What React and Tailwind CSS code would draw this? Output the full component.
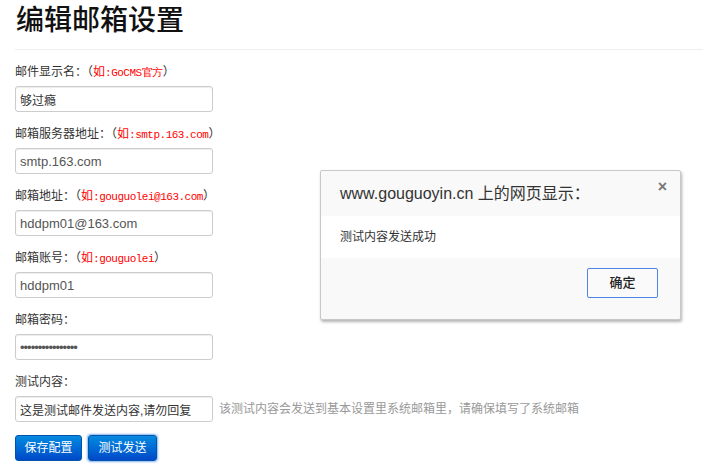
import React from 'react';

const cjk = { fontFamily: '"Liberation Sans", "Noto Sans CJK SC", sans-serif' };

// one labelled field of the mail settings form
const Field = ({ label, example, value, type = 'text', cjkValue = false, hint }) => (
    <div className="mb-[13px]">
        <div className="h-[18px] text-[12px] leading-[18px] text-[#333] whitespace-nowrap">
            {label}：{example && (
                <>
                    （<span className="text-[#f00]">如<span className="font-['Liberation_Mono',monospace] text-[11px] leading-[18px] tracking-[-0.5px]">{example}</span></span>）
                </>
            )}
        </div>
        <div className="mt-[5px] h-[26px] flex items-center">
            <input
                type={type}
                readOnly
                value={value}
                className={`w-[198px] h-[26px] px-[4px] border border-[#ccc] rounded-[3px] bg-white shadow-[inset_0_1px_1px_rgba(0,0,0,0.075)] outline-none ${cjkValue ? 'text-[12px] text-[#333]' : 'text-[13px] text-[#555]'} ${type === 'password' ? 'text-[10px] tracking-[-1px]' : ''}`}
                style={cjk}
            />
            {hint && <span className="ml-[6px] text-[12px] leading-[18px] text-[#999]">{hint}</span>}
        </div>
    </div>
);

export default function App() {
    return (
        <div className="relative w-[703px] h-[476px] bg-white overflow-hidden" style={cjk}>
            <div className="pl-[15px]">
                <h1 className="h-[50px] text-[28px] leading-[40px] pt-[1px] pl-[1px] font-medium text-[#111] border-b border-[#eee]">
                    编辑邮箱设置
                </h1>

                <div className="pt-[13px]">
                    <Field label="邮件显示名" example=":GoCMS官方" value="够过瘾" cjkValue />
                    <Field label="邮箱服务器地址" example=":smtp.163.com" value="smtp.163.com" />
                    <Field label="邮箱地址" example=":gouguolei@163.com" value="hddpm01@163.com" />
                    <Field label="邮箱账号" example=":gouguolei" value="hddpm01" />
                    <Field label="邮箱密码" value="hddpm01hddpm012x" type="password" />
                    <Field
                        label="测试内容"
                        value="这是测试邮件发送内容,请勿回复"
                        cjkValue
                        hint="该测试内容会发送到基本设置里系统邮箱里，请确保填写了系统邮箱"
                    />
                </div>

                <div className="flex gap-[6px] mt-[2px]">
                    <button className="h-[26px] w-[67px] text-[12px] leading-[24px] text-white rounded-[3px] border border-[#0055aa] bg-linear-to-b from-[#0a8ae0] to-[#0048c8]">
                        保存配置
                    </button>
                    <button className="h-[26px] w-[69px] text-[12px] leading-[24px] text-white rounded-[3px] border border-[#0055aa] bg-linear-to-b from-[#0a8ae0] to-[#0048c8] shadow-[0_0_2px_1px_rgba(82,148,236,0.7)]">
                        测试发送
                    </button>
                </div>
            </div>

            {/* alert dialog */}
            <div className="absolute left-[320px] top-[170px] w-[361px] h-[150px] border border-[#c8c8c8] rounded-[2px] bg-[#f9f9f9] shadow-[1px_2px_3px_rgba(0,0,0,0.3)] flex flex-col">
                <div className="h-[45px] relative flex items-center pl-[19px] text-[16px] text-[#333]">
                    www.gouguoyin.cn 上的网页显示：
                    <span className="absolute right-[13px] top-[6px] text-[16px] leading-[20px] font-bold text-[#777]">×</span>
                </div>
                <div className="h-[42px] bg-white flex items-center pl-[19px] text-[12px] text-[#333]">
                    测试内容发送成功
                </div>
                <div className="flex-1 flex justify-end items-start pt-[10px] pr-[22px]">
                    <button className="w-[71px] h-[30px] border border-[#4d85e5] rounded-[2px] bg-[#fafafa] text-[13px] font-medium text-[#222]">
                        确定
                    </button>
                </div>
            </div>
        </div>
    );
}
